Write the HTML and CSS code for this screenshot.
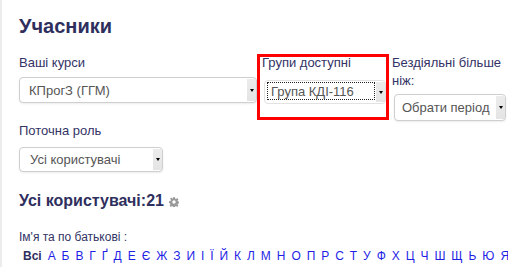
FILE: index.html
```html
<!DOCTYPE html>
<html lang="uk">
<head>
<meta charset="utf-8">
<link rel="stylesheet" href="styles.css">
</head>
<body>
<div class="page">
  <h2 class="title">Учасники</h2>
  <div class="filters">
    <div class="field col-course">
      <div class="label">Ваші курси</div>
      <div class="select sel-course"><span class="sel-text">КПрогЗ (ГГМ)</span><span class="arrow"></span></div>
    </div>
    <div class="field col-group">
      <div class="label">Групи доступні</div>
      <div class="select sel-group"><span class="sel-text focus">Група КДІ-116</span><span class="arrow"></span></div>
    </div>
    <div class="field col-idle">
      <div class="label">Бездіяльні більше ніж:</div>
      <div class="select sel-idle"><span class="sel-text">Обрати період</span><span class="arrow"></span></div>
    </div>
  </div>
  <div class="field col-role">
    <div class="label">Поточна роль</div>
    <div class="select sel-role"><span class="sel-text">Усі користувачі</span><span class="arrow"></span></div>
  </div>
  <h3 class="count">Усі користувачі:21 <svg class="gear" viewBox="0 0 10 10" width="10" height="10"><path fill="#9a9a9a" fill-rule="evenodd" d="M4.2 0h1.6l.3 1.4 1 .5 1.2-.8 1.1 1.1-.8 1.2.5 1 1.4.3v1.6l-1.4.3-.5 1 .8 1.2-1.1 1.1-1.2-.8-1 .5-.3 1.4H4.2l-.3-1.4-1-.5-1.2.8-1.1-1.1.8-1.2-.5-1L0 5.8V4.2l1.4-.3.5-1-.8-1.2 1.1-1.1 1.2.8 1-.5zM5 3.3a1.7 1.7 0 1 0 0 3.4 1.7 1.7 0 0 0 0-3.4z"/></svg></h3>
  <div class="initials-label">Ім'я та по батькові :</div>
  <div class="initials">
    <b class="all">Всі</b>
    <a>А</a><a>Б</a><a>В</a><a>Г</a><a>Ґ</a><a>Д</a><a>Е</a><a>Є</a><a>Ж</a><a>З</a><a>И</a><a>І</a><a>Ї</a><a>Й</a><a>К</a><a>Л</a><a>М</a><a>Н</a><a>О</a><a>П</a><a>Р</a><a>С</a><a>Т</a><a>У</a><a>Ф</a><a>Х</a><a>Ц</a><a>Ч</a><a>Ш</a><a>Щ</a><a>Ь</a><a>Ю</a><a>Я</a>
  </div>
</div>
</body>
</html>
```
FILE: styles.css
```css
html, body {
  margin: 0;
  padding: 0;
  background: #fff;
}
body {
  font-family: "Liberation Sans", Arial, sans-serif;
  color: #333366;
  overflow: hidden;
}
.page {
  border-left: 2px solid #ececec;
  padding: 14px 0 0 17px;
  height: 253px;
}
.title {
  margin: 0;
  font-size: 20px;
  line-height: 24px;
  font-weight: bold;
  color: #2f2f5e;
}
.filters {
  display: flex;
  align-items: flex-start;
  margin-top: 16px;
}
.label {
  font-size: 13px;
  line-height: 18px;
}
.select {
  position: relative;
  display: flex;
  align-items: center;
  box-sizing: border-box;
  border: 1px solid #cfcfcf;
  border-radius: 4px;
  background: #fff;
  box-shadow: 0 1px 2px rgba(0,0,0,0.08);
  font-size: 13px;
  color: #555;
}
.sel-text {
  flex: 1;
  white-space: nowrap;
}
.arrow {
  align-self: stretch;
  width: 9px;
  margin: 1px 0;
  background: #ececec linear-gradient(#ececec, #e4e4e4);
  display: flex;
  align-items: center;
  justify-content: center;
}
.arrow::after {
  content: "";
  border-left: 2.5px solid transparent;
  border-right: 2.5px solid transparent;
  border-top: 3px solid #000;
}
.col-course {
  width: 238px;
}
.sel-course {
  margin-top: 5px;
  height: 26px;
  padding-left: 9px;
}
.col-group {
  margin-left: 3px;
  width: 126px;
  height: 60px;
  margin-top: 3px;
  outline: 3px solid #ff0000;
  box-sizing: border-box;
  padding-left: 2px;
}
.col-group .label {
  margin-top: -3px;
}
.sel-group {
  margin-top: 8px;
  margin-left: 2px;
  height: 24px;
  padding-left: 2px;
  border-color: #e2e2e2;
  box-shadow: none;
}
.sel-group .focus {
  flex: 1;
  align-self: stretch;
  margin: 1px 1px 3px 0;
  border: 1px dotted #222;
  padding-left: 3px;
  display: flex;
  align-items: center;
}
.col-idle {
  margin-left: 6px;
  width: 116px;
}
.sel-idle {
  margin-top: 4px;
  margin-left: 2px;
  width: 112px;
  height: 27px;
  padding-left: 7px;
}
.col-role {
  margin-top: 1px;
}
.sel-role {
  margin-top: 7px;
  width: 144px;
  height: 25px;
  padding-left: 10px;
}
.count {
  margin: 19px 0 0;
  font-size: 16px;
  line-height: 20px;
  font-weight: bold;
  color: #2f2f5e;
  display: flex;
  align-items: center;
  gap: 5px;
}
.gear {
  margin-top: 2px;
}
.initials-label {
  margin-top: 18px;
  font-size: 12px;
  line-height: 16px;
}
.initials {
  display: flex;
  gap: 5.95px;
  padding-left: 4px;
  font-size: 12px;
  line-height: 16px;
  margin-top: 3px;
  white-space: nowrap;
}
.initials .all {
  color: #2f2f5e;
}
.initials a {
  color: #1f1fe6;
  text-decoration: none;
}
```
